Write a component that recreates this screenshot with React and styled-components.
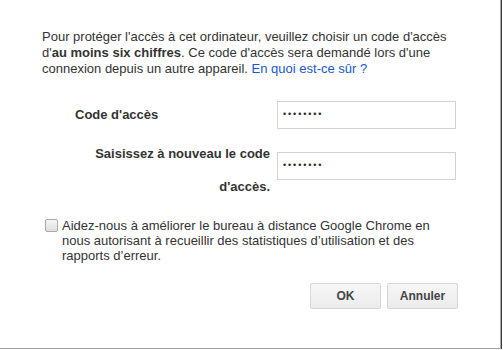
import React from "react";
import styled, { createGlobalStyle } from "styled-components";

const Global = createGlobalStyle`
  html, body { margin: 0; padding: 0; background: #fff; }
  body { font-family: "Liberation Sans", Arial, sans-serif; }
`;

const Dialog = styled.div`
  box-sizing: border-box;
  width: 501px;
  height: 349px;
  padding: 29px 42px 0 42px;
  background: #fff;
  border-right: 1px solid #a8a8a8;
  border-bottom: 1px solid #a0a0a0;
  box-shadow: 1px 0 0 #3a3a3a;
  color: #333;
`;

const Intro = styled.p`
  margin: 0;
  font-size: 13px;
  line-height: 16px;
  color: #333;
`;

const Link = styled.a`
  color: #1558d0;
  text-decoration: none;
`;

const Form = styled.div`
  display: grid;
  grid-template-columns: 228px 179px;
  column-gap: 7px;
  row-gap: 8px;
  margin-top: 24px;
  align-items: start;
`;

const Label = styled.label`
  font-size: 13px;
  font-weight: bold;
  color: #333;
  line-height: ${(p) => p.$lh}px;
  text-align: ${(p) => p.$align};
  justify-self: ${(p) => (p.$align === "right" ? "end" : "start")};
  padding-left: ${(p) => p.$indent || 0}px;
  max-width: ${(p) => p.$max || 228}px;
`;

const Input = styled.input`
  box-sizing: border-box;
  width: 179px;
  height: 28px;
  margin: ${(p) => p.$top || 0}px 0 0 0;
  padding: 0 5px 2px 5px;
  border: 1px solid #d2d2d2;
  border-radius: 0;
  font-family: "Liberation Sans", Arial, sans-serif;
  font-size: 9px;
  color: #2a2a2a;
  outline: none;
  letter-spacing: 1.9px;
`;

const CheckRow = styled.div`
  display: flex;
  align-items: flex-start;
  margin-top: 15px;
  font-size: 13px;
  line-height: 15px;
  color: #333;
`;

const Check = styled.input`
  appearance: none;
  -webkit-appearance: none;
  box-sizing: border-box;
  flex: none;
  width: 13px;
  height: 13px;
  margin: 1px 4px 0 3px;
  border: 1px solid #a9a9a9;
  border-radius: 2px;
  background: linear-gradient(#f6f6f6, #dedede);
`;

const Buttons = styled.div`
  display: flex;
  justify-content: flex-end;
  gap: 6px;
  margin-top: 20px;
`;

const Button = styled.button`
  box-sizing: border-box;
  width: 71px;
  height: 26px;
  padding: 0;
  border: 1px solid #d6d6d6;
  border-radius: 2px;
  background: linear-gradient(#f6f6f6, #ececec);
  font-family: "Liberation Sans", Arial, sans-serif;
  font-size: 12px;
  font-weight: bold;
  color: #444;
`;

export default function App() {
  return (
    <>
      <Global />
      <Dialog>
        <Intro>
          Pour protéger l'accès à cet ordinateur, veuillez choisir un code d'accès d'
          <b>au moins six chiffres</b>. Ce code d'accès sera demandé lors d'une connexion
          depuis un autre appareil. <Link href="#">En quoi est-ce sûr ?</Link>
        </Intro>
        <Form>
          <Label $align="left" $lh={28} $indent={33}>Code d'accès</Label>
          <Input type="password" defaultValue="12345678" readOnly />
          <Label $align="right" $lh={33} $max={175}>
            Saisissez à nouveau le code d'accès.
          </Label>
          <Input type="password" defaultValue="12345678" readOnly $top={15} />
        </Form>
        <CheckRow>
          <Check type="checkbox" />
          <span>
            Aidez-nous à améliorer le bureau à distance Google Chrome en nous autorisant à
            recueillir des statistiques d’utilisation et des rapports d’erreur.
          </span>
        </CheckRow>
        <Buttons>
          <Button>OK</Button>
          <Button>Annuler</Button>
        </Buttons>
      </Dialog>
    </>
  );
}
